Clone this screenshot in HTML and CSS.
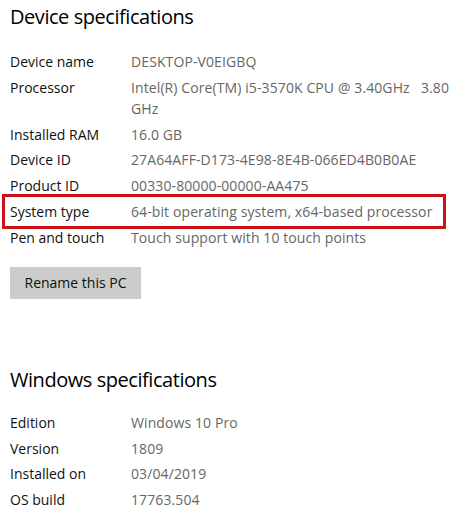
FILE: index.html
```html
<!DOCTYPE html>
<html>
<head>
<meta charset="utf-8">
<link rel="stylesheet" href="styles.css">
</head>
<body>
<div class="page">
  <h2 class="title">Device specifications</h2>
  <div class="specs">
    <div class="row"><span class="label">Device name</span><span class="value">DESKTOP-V0EIGBQ</span></div>
    <div class="row"><span class="label">Processor</span><span class="value">Intel(R) Core(TM) i5-3570K CPU @ 3.40GHz&nbsp;&nbsp;&nbsp;3.80<br>GHz</span></div>
    <div class="row"><span class="label">Installed RAM</span><span class="value">16.0 GB</span></div>
    <div class="row"><span class="label">Device ID</span><span class="value">27A64AFF-D173-4E98-8E4B-066ED4B0B0AE</span></div>
    <div class="row"><span class="label">Product ID</span><span class="value">00330-80000-00000-AA475</span></div>
    <div class="row highlight"><span class="label">System type</span><span class="value">64-bit operating system, x64-based processor</span></div>
    <div class="row"><span class="label">Pen and touch</span><span class="value">Touch support with 10 touch points</span></div>
  </div>
  <button class="btn">Rename this PC</button>
  <h2 class="title title2">Windows specifications</h2>
  <div class="specs">
    <div class="row"><span class="label">Edition</span><span class="value">Windows 10 Pro</span></div>
    <div class="row"><span class="label">Version</span><span class="value">1809</span></div>
    <div class="row"><span class="label">Installed on</span><span class="value">03/04/2019</span></div>
    <div class="row"><span class="label">OS build</span><span class="value">17763.504</span></div>
  </div>
</div>
</body>
</html>
```

FILE: styles.css
```css
html, body {
  margin: 0;
  padding: 0;
  background: #fff;
}
body {
  font-family: "Open Sans", "Noto Sans", sans-serif;
  color: #000;
  width: 469px;
  height: 517px;
  overflow: hidden;
}
.page {
  padding: 0 0 0 10px;
}
.title {
  font-weight: 400;
  font-size: 20px;
  line-height: 28px;
  margin: 3px 0 0 0;
  letter-spacing: -0.45px;
}
.title2 {
  margin-top: 67px;
}
.specs {
  display: flex;
  flex-direction: column;
  gap: 4.8px;
  margin-top: 20px;
}
.title2 + .specs {
  margin-top: 18px;
}
.row {
  display: grid;
  grid-template-columns: 121px 1fr;
  font-size: 14px;
  line-height: 21px;
  position: relative;
}
.label {
  color: #111;
}
.value {
  color: #666;
  letter-spacing: 0.1px;
}
.highlight::before {
  content: "";
  position: absolute;
  left: -8px;
  right: 23px;
  top: -7px;
  bottom: -7px;
  border: 3px solid #cc1118;
}
.btn {
  margin-top: 19px;
  font-family: inherit;
  font-size: 14px;
  background: #ccc;
  border: none;
  width: 131px;
  height: 32px;
  padding: 0;
  color: #111;
}
```
